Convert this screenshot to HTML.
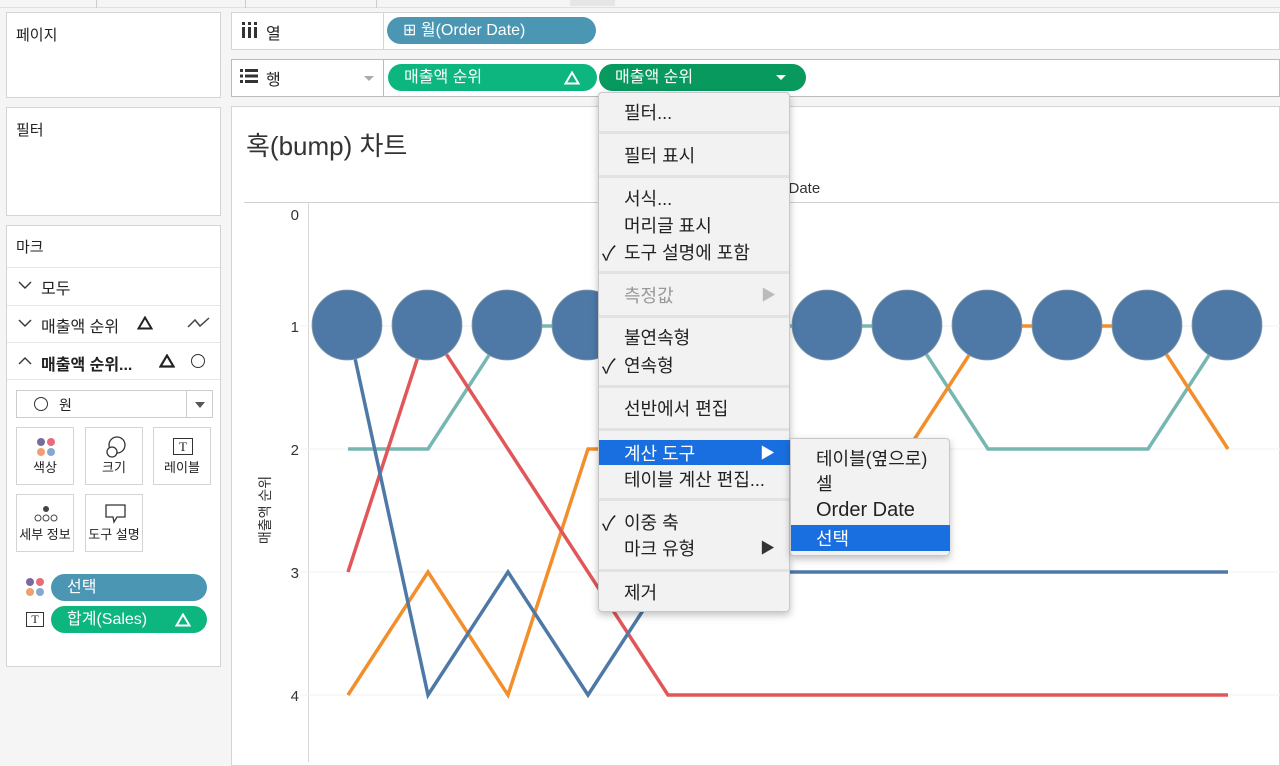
<!DOCTYPE html>
<html><head><meta charset="utf-8"><style>
*{box-sizing:border-box;margin:0;padding:0}
body{width:1280px;height:762px;overflow:hidden;background:#f5f5f5;font-family:"Liberation Sans","Noto Sans CJK KR",sans-serif;color:#222;position:relative}
.abs{position:absolute}
.panel{position:absolute;background:#fff;border:1px solid #d4d4d4}
.pill{position:absolute;height:27px;border-radius:14px;color:#fff;font-size:16px;line-height:27px;padding-left:16px}
.menu{position:absolute;background:#f2f2f2;border:1px solid #c8c8c8;border-radius:4px;box-shadow:0 3px 8px rgba(0,0,0,.25);font-size:18px}
.mi{position:absolute;left:25px}
.sep{position:absolute;left:0;right:0;height:3px;background:#e2e2e2}
.card{position:absolute;width:58px;height:58px;border:1px solid #d4d4d4;background:#fff;font-size:13px;text-align:center}
.card span{position:absolute;bottom:8px;left:0;right:0}
.chk{position:absolute;left:3px;font-size:20px}
</style></head><body>
<div class="abs" style="left:0;top:0;width:1280px;height:8px;background:#f5f5f5;border-bottom:1px solid #e0e0e0"></div>
<div class="abs" style="left:96px;top:0;width:1px;height:8px;background:#ccc"></div>
<div class="abs" style="left:245px;top:0;width:1px;height:8px;background:#ccc"></div>
<div class="abs" style="left:376px;top:0;width:1px;height:8px;background:#ccc"></div>
<div class="abs" style="left:570px;top:0;width:45px;height:6px;background:#e6e6e6"></div>

<div class="panel" style="left:6px;top:12px;width:215px;height:86px"><div class="abs" style="left:9px;top:11px;font-size:15px">페이지</div></div>
<div class="panel" style="left:6px;top:107px;width:215px;height:109px"><div class="abs" style="left:9px;top:11px;font-size:15px">필터</div></div>
<div class="panel" style="left:6px;top:225px;width:215px;height:442px">
 <div class="abs" style="left:9px;top:10px;font-size:15px">마크</div>
 <div class="abs" style="left:0;top:41px;width:213px;height:1px;background:#e6e6e6"></div>
 <svg class="abs" style="left:11px;top:54px" width="14" height="10"><path d="M1 2 L7 8 L13 2" stroke="#333" stroke-width="1.4" fill="none"/></svg>
 <div class="abs" style="left:34px;top:49px;font-size:16px">모두</div>
 <div class="abs" style="left:0;top:79px;width:213px;height:1px;background:#e6e6e6"></div>
 <svg class="abs" style="left:11px;top:92px" width="14" height="10"><path d="M1 2 L7 8 L13 2" stroke="#333" stroke-width="1.4" fill="none"/></svg>
 <div class="abs" style="left:34px;top:87px;font-size:16px">매출액 순위</div>
 <svg class="abs" style="left:130px;top:90px" width="16" height="14"><path d="M8 1.5 L14.5 12.5 H1.5 Z" fill="none" stroke="#222" stroke-width="2"/></svg>
 <svg class="abs" style="left:180px;top:89px" width="24" height="16"><path d="M1 12 L8 5 L13 11 L22 3" stroke="#444" stroke-width="1.5" fill="none"/></svg>
 <div class="abs" style="left:0;top:116px;width:213px;height:1px;background:#e6e6e6"></div>
 <svg class="abs" style="left:11px;top:130px" width="14" height="10"><path d="M1 8 L7 2 L13 8" stroke="#333" stroke-width="1.4" fill="none"/></svg>
 <div class="abs" style="left:34px;top:125px;font-size:16px;font-weight:bold">매출액 순위...</div>
 <svg class="abs" style="left:152px;top:128px" width="16" height="14"><path d="M8 1.5 L14.5 12.5 H1.5 Z" fill="none" stroke="#222" stroke-width="2.2"/></svg>
 <div class="abs" style="left:184px;top:128px;width:14px;height:14px;border:1.5px solid #333;border-radius:50%"></div>
 <div class="abs" style="left:0;top:153px;width:213px;height:1px;background:#e6e6e6"></div>
 <div class="abs" style="left:9px;top:164px;width:197px;height:28px;border:1px solid #ccc;background:#fff">
  <div class="abs" style="left:17px;top:6px;width:14px;height:14px;border:1.5px solid #333;border-radius:50%"></div>
  <div class="abs" style="left:42px;top:4px;font-size:14px">원</div>
  <div class="abs" style="left:169px;top:0;width:1px;height:26px;background:#ccc"></div>
  <div class="abs" style="left:178px;top:11px;border-left:5px solid transparent;border-right:5px solid transparent;border-top:6px solid #555"></div>
 </div>
</div>
<div class="card" style="left:16px;top:427px"><svg class="abs" style="left:19px;top:9px" width="22" height="22"><circle cx="5" cy="5" r="4" fill="#7b6b9c"/><circle cx="15" cy="5" r="4" fill="#e66b7b"/><circle cx="5" cy="15" r="4" fill="#f0a070"/><circle cx="15" cy="15" r="4" fill="#86a8d0"/></svg><span>색상</span></div>
<div class="card" style="left:85px;top:427px"><svg class="abs" style="left:18px;top:7px" width="24" height="24"><circle cx="13" cy="10" r="8" fill="none" stroke="#333" stroke-width="1.3"/><circle cx="8" cy="17" r="5" fill="#fff" stroke="#333" stroke-width="1.3"/></svg><span>크기</span></div>
<div class="card" style="left:153px;top:427px"><div class="abs" style="left:19px;top:10px;width:20px;height:17px;border:1.3px solid #333;font-family:'Liberation Serif',serif;font-size:13px;line-height:15px">T</div><span>레이블</span></div>
<div class="card" style="left:16px;top:494px"><svg class="abs" style="left:16px;top:9px" width="26" height="20"><circle cx="13" cy="5" r="3" fill="#444"/><circle cx="5" cy="14" r="3" fill="none" stroke="#444"/><circle cx="13" cy="14" r="3" fill="none" stroke="#444"/><circle cx="21" cy="14" r="3" fill="none" stroke="#444"/></svg><span>세부 정보</span></div>
<div class="card" style="left:85px;top:494px"><svg class="abs" style="left:18px;top:8px" width="24" height="22"><path d="M2 2 H21 V14 H13 L10 19 L9 14 H2 Z" fill="none" stroke="#333" stroke-width="1.3"/></svg><span>도구 설명</span></div>
<svg class="abs" style="left:25px;top:577px" width="20" height="20"><circle cx="5" cy="5" r="4" fill="#7b6b9c"/><circle cx="15" cy="5" r="4" fill="#e66b7b"/><circle cx="5" cy="15" r="4" fill="#f0a070"/><circle cx="15" cy="15" r="4" fill="#86a8d0"/></svg>
<div class="pill" style="left:51px;top:574px;width:156px;background:#4a96b3">선택</div>
<div class="abs" style="left:26px;top:612px;width:18px;height:15px;border:1.2px solid #333;font-family:'Liberation Serif',serif;font-size:12px;line-height:13px;text-align:center;background:#fff">T</div>
<div class="pill" style="left:51px;top:606px;width:156px;background:#0db57f">합계(Sales)<svg class="abs" style="right:16px;top:7px" width="16" height="14"><path d="M8 1.5 L14.5 12.5 H1.5 Z" fill="none" stroke="#fff" stroke-width="2"/></svg></div>

<div class="panel" style="left:231px;top:12px;width:1049px;height:38px"></div>
<div class="abs" style="left:383px;top:12px;width:1px;height:38px;background:#d4d4d4"></div>
<svg class="abs" style="left:241px;top:22px" width="18" height="16"><g fill="#333"><rect x="1" y="5" width="3" height="11"/><rect x="7" y="5" width="3" height="11"/><rect x="13" y="5" width="3" height="11"/><rect x="1" y="0" width="3" height="3"/><rect x="7" y="0" width="3" height="3"/><rect x="13" y="0" width="3" height="3"/></g></svg>
<div class="abs" style="left:266px;top:20px;font-size:16px">열</div>
<div class="pill" style="left:387px;top:17px;width:209px;background:#4a96b3;padding-left:16px">⊞ 월(Order Date)</div>
<div class="panel" style="left:231px;top:59px;width:1049px;height:38px;border-color:#bbb"></div>
<div class="abs" style="left:383px;top:59px;width:1px;height:38px;background:#bbb"></div>
<svg class="abs" style="left:240px;top:69px" width="18" height="14"><g fill="#333"><rect x="0" y="0" width="3" height="3"/><rect x="5" y="0" width="13" height="3"/><rect x="0" y="5.5" width="3" height="3"/><rect x="5" y="5.5" width="13" height="3"/><rect x="0" y="11" width="3" height="3"/><rect x="5" y="11" width="13" height="3"/></g></svg>
<div class="abs" style="left:266px;top:66px;font-size:16px">행</div>
<div class="abs" style="left:364px;top:76px;border-left:5px solid transparent;border-right:5px solid transparent;border-top:5px solid #aaa"></div>
<div class="pill" style="left:388px;top:64px;width:209px;background:#0db57f">매출액 순위<svg class="abs" style="right:17px;top:7px" width="16" height="14"><path d="M8 1.5 L14.5 12.5 H1.5 Z" fill="none" stroke="#fff" stroke-width="2"/></svg></div>
<div class="pill" style="left:599px;top:64px;width:207px;background:#08995f">매출액 순위<span class="abs" style="right:20px;top:11px;border-left:5px solid transparent;border-right:5px solid transparent;border-top:5px solid #fff"></span></div>

<div class="panel" style="left:231px;top:106px;width:1049px;height:660px"></div>
<div class="abs" style="left:246px;top:126px;font-size:26px;color:#333">혹(bump) 차트</div>
<div class="abs" style="left:746px;top:180px;font-size:15px;color:#333">Order Date</div>
<svg class="abs" style="left:0;top:0" width="1280" height="762">
 <line x1="244" y1="202.5" x2="1280" y2="202.5" stroke="#d0d0d0"/>
 <line x1="308.5" y1="203" x2="308.5" y2="762" stroke="#d8d8d8"/>
 <g stroke="#f0f0f0"><line x1="300" y1="326" x2="1280" y2="326"/><line x1="300" y1="449" x2="1280" y2="449"/><line x1="300" y1="572" x2="1280" y2="572"/><line x1="300" y1="695" x2="1280" y2="695"/></g>
 <g font-size="15" fill="#333" text-anchor="end" font-family="Liberation Sans"><text x="299" y="220">0</text><text x="299" y="332">1</text><text x="299" y="455">2</text><text x="299" y="578">3</text><text x="299" y="701">4</text></g>
 <text transform="translate(270,510) rotate(-90)" font-size="14" fill="#333" text-anchor="middle" font-family="Liberation Sans, Noto Sans CJK KR">매출액 순위</text>
 <g fill="none" stroke-width="3.5" stroke-linejoin="miter">
  <polyline stroke="#76b7b2" points="348,449 428,449 508,326 908,326 988,449 1148,449 1228,326"/>
  <polyline stroke="#f28e2b" points="348,695 428,572 508,695 588,449 908,449 988,326 1148,326 1228,449"/>
  <polyline stroke="#e15759" points="348,572 428,326 668,695 1228,695"/>
  <polyline stroke="#4e79a7" points="348,326 428,695 508,572 588,695 668,572 1228,572"/>
 </g>
 <g fill="#4e79a7" stroke="#8a9bb0" stroke-width="0.8">
  <circle cx="347" cy="325" r="35"/><circle cx="427" cy="325" r="35"/><circle cx="507" cy="325" r="35"/><circle cx="587" cy="325" r="35"/>
  <circle cx="827" cy="325" r="35"/><circle cx="907" cy="325" r="35"/><circle cx="987" cy="325" r="35"/><circle cx="1067" cy="325" r="35"/><circle cx="1147" cy="325" r="35"/><circle cx="1227" cy="325" r="35"/>
 </g>
</svg>

<div class="menu" style="left:598px;top:92px;width:192px;height:520px">
 <div class="mi" style="top:6px">필터...</div>
 <div class="sep" style="top:38px"></div>
 <div class="mi" style="top:49px">필터 표시</div>
 <div class="sep" style="top:82px"></div>
 <div class="mi" style="top:92px">서식...</div>
 <div class="mi" style="top:119px">머리글 표시</div>
 <div class="chk" style="top:144px">✓</div><div class="mi" style="top:146px">도구 설명에 포함</div>
 <div class="sep" style="top:178px"></div>
 <div class="mi" style="top:189px;color:#999">측정값</div><div class="abs" style="left:162px;top:191px;color:#bbb;font-size:15px">▶</div>
 <div class="sep" style="top:222px"></div>
 <div class="mi" style="top:231px">불연속형</div>
 <div class="chk" style="top:257px">✓</div><div class="mi" style="top:259px">연속형</div>
 <div class="sep" style="top:292px"></div>
 <div class="mi" style="top:302px">선반에서 편집</div>
 <div class="sep" style="top:335px"></div>
 <div class="abs" style="left:0;top:347px;width:191px;height:25px;background:#1a6fe0"></div>
 <div class="mi" style="top:347px;color:#fff">계산 도구</div><div class="abs" style="left:161px;top:349px;color:#fff;font-size:15px">▶</div>
 <div class="mi" style="top:373px">테이블 계산 편집...</div>
 <div class="sep" style="top:405px"></div>
 <div class="chk" style="top:414px">✓</div><div class="mi" style="top:416px">이중 축</div>
 <div class="mi" style="top:442px">마크 유형</div><div class="abs" style="left:161px;top:444px;font-size:15px;color:#333">▶</div>
 <div class="sep" style="top:476px"></div>
 <div class="mi" style="top:486px">제거</div>
</div>
<div class="menu" style="left:790px;top:438px;width:160px;height:118px;border-radius:0 4px 4px 4px">
 <div class="mi" style="top:6px">테이블(옆으로)</div>
 <div class="mi" style="top:31px">셀</div>
 <div class="mi" style="top:60px;font-size:20px">Order Date</div>
 <div class="abs" style="left:0;top:86px;width:159px;height:26px;background:#1a6fe0"></div>
 <div class="mi" style="top:86px;color:#fff">선택</div>
</div>
</body></html>
